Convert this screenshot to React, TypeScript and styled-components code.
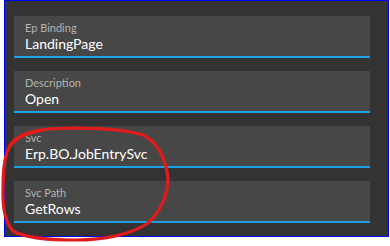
import styled, {createGlobalStyle} from "styled-components";

const GlobalStyle = createGlobalStyle`
  html, body {
    margin: 0;
    padding: 0;
    background: #ffffff;
  }
  body {
    font-family: Lato, "Open Sans", sans-serif;
  }
`

type FieldItem = {
    label: string;
    value: string;
}

const fields: FieldItem[] = [
    {label: "Ep Binding", value: "LandingPage"},
    {label: "Description", value: "Open"},
    {label: "Svc", value: "Erp.BO.JobEntrySvc"},
    {label: "Svc Path", value: "GetRows"},
];

export default function App() {
    return (
        <StyledPage>
            <GlobalStyle/>
            <StyledPanel>
                {fields.map(f => (
                    <StyledField key={f.label}>
                        <StyledLabel>{f.label}</StyledLabel>
                        <StyledValue>{f.value}</StyledValue>
                    </StyledField>
                ))}
            </StyledPanel>
            <StyledScribble width="390" height="246" viewBox="0 0 390 246">
                <path
                    d="M9 147 C 14 136, 28 131, 48 129 C 80 127, 120 128, 143 135 C 158 142, 166 160, 168 178 C 168 195, 160 212, 148 223 C 132 234, 105 240, 75 240 C 50 240, 25 238, 13 231 C 5 222, 3 208, 3 195 C 3 180, 3 165, 7 152 C 12 140, 22 134, 40 131"
                    fill="none"
                    stroke="#e01b1b"
                    strokeWidth="3.2"
                    strokeLinecap="round"
                />
            </StyledScribble>
        </StyledPage>
    )
}

const StyledPage = styled.div`
  position: relative;
  width: 390px;
  height: 246px;
  padding-left: 4px;
  box-sizing: border-box;
`

const StyledPanel = styled.div`
  width: 385px;
  height: 237px;
  box-sizing: border-box;
  border: 1px solid #0000ff;
  background-color: #333333;
  padding: 15px 18px 13px 9px;
  display: flex;
  flex-direction: column;
  gap: 13px;
`

const StyledField = styled.div`
  height: 42px;
  box-sizing: border-box;
  background-color: #474747;
  border-bottom: 2px solid #1ea0e6;
  padding: 5px 10px 0 11px;
  display: flex;
  flex-direction: column;
`

const StyledLabel = styled.span`
  font-size: 11px;
  line-height: 14px;
  color: #b3b3b3;
`

const StyledValue = styled.span`
  font-size: 14px;
  line-height: 18px;
  color: #ffffff;
`

const StyledScribble = styled.svg`
  position: absolute;
  left: 0;
  top: 0;
  pointer-events: none;
`
